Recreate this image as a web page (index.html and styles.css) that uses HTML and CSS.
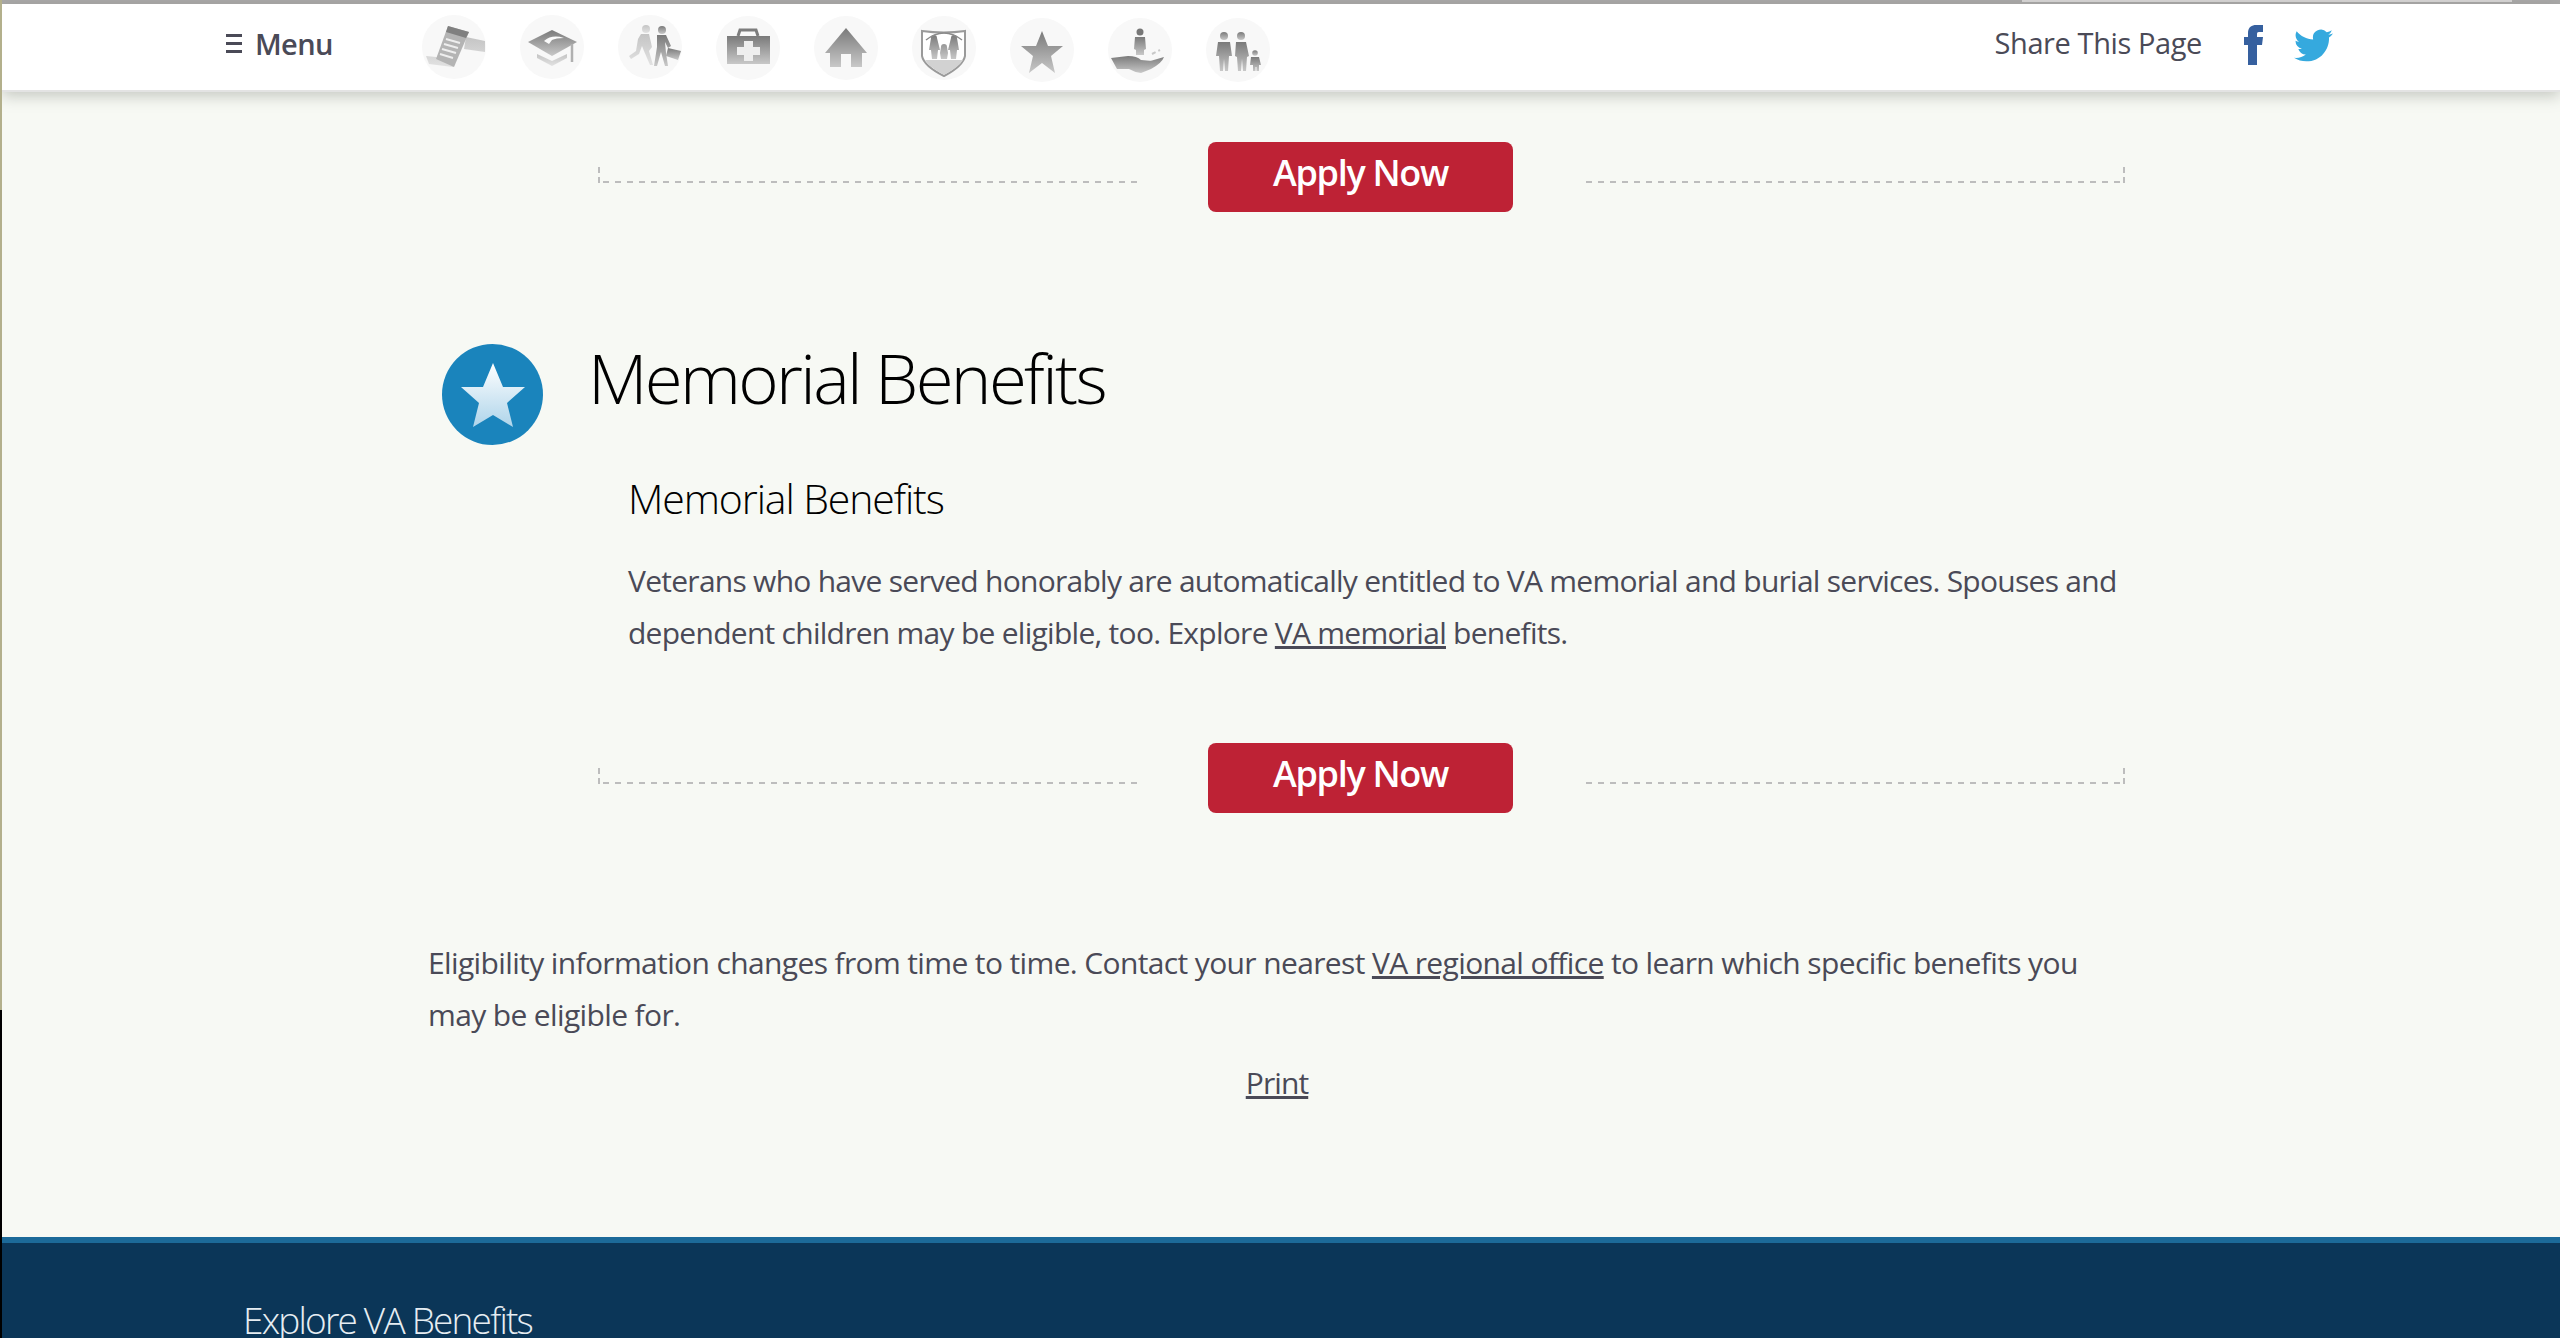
FILE: index.html
```html
<!DOCTYPE html>
<html>
    <head>
        <meta charset="utf-8">
        <title>Memorial Benefits</title>
        <link rel="stylesheet" href="styles.css">
    </head>
    <body>
        <svg class="defs" width="0" height="0">
            <defs>
                <linearGradient id="gy" x1="0" y1="0" x2="0" y2="1">
                    <stop offset="0" stop-color="#7a7a7a"/>
                    <stop offset="1" stop-color="#c8c8c8"/>
                </linearGradient>
                <linearGradient id="lt" x1="0" y1="0" x2="0" y2="1">
                    <stop offset="0" stop-color="#c4c4c4"/>
                    <stop offset="1" stop-color="#e2e2e2"/>
                </linearGradient>
                <linearGradient id="st" x1="0" y1="0" x2="0" y2="1">
                    <stop offset="0" stop-color="#fff"/>
                    <stop offset="1" stop-color="#aed4ea"/>
                </linearGradient>
            </defs>
        </svg>
        <div id="page">
            <div id="topstrip"></div>
            <div id="nav">
                <a class="menu"><span class="burger"><i></i><i></i><i></i></span>Menu</a>
                <div class="navicons">
                    <span class="ni"><svg viewBox="0 0 64 64"><path fill="url(#lt)" d="M44 22l19 4v11l-21-3zM4 41l30 3-3 8-24-3z"/><path fill="#b4b4b4" d="M26 11l21 6-15 35-18-8z"/><path fill="#808080" d="M26 11l21 6-3 6-20-6z"/><path fill="none" stroke="#eee" stroke-width="2" d="M24 24l14 4M22 29l14 4M20 34l14 4M18 39l13 4"/></svg></span>
                    <span class="ni"><svg viewBox="0 0 64 64"><path fill="url(#gy)" d="M32 15l25 12-25 14L8 27z"/><path fill="#fafafa" d="M24 26q8-7 20-3-8 0-12 2l-3 4z"/><path fill="url(#lt)" d="M17 39l15 7 15-7v4L32 51l-15-8z"/><path fill="none" stroke="#b0b0b0" stroke-width="2.500" d="M52 29v18"/></svg></span>
                    <span class="ni"><svg viewBox="0 0 64 64"><g fill="url(#lt)"><circle cx="28" cy="14" r="4"/><path d="M23 19h8l3 13-3 4 4 14h-3l-6-14-2-5-3 8-8 5-2-3 7-5 2-12z"/></g><g fill="url(#gy)"><circle cx="44" cy="15" r="4"/><path d="M39 20h9l5 11-3 2-3-6 1 11 2 13h-3l-4-14-4 14h-3l3-19z"/><path d="M50 33l13 3-3 9-12-4z"/></g></svg></span>
                    <span class="ni"><svg viewBox="0 0 64 64"><path fill="none" stroke="#7d7d7d" stroke-width="3" d="M22 20l2-6h16l2 6"/><path fill="url(#gy)" d="M11 20h43v28H11z"/><path fill="#eee" d="M28 25h9v6h7v8h-7v6h-9v-6h-7v-8h7z"/></svg></span>
                    <span class="ni"><svg viewBox="0 0 64 64"><path fill="url(#gy)" d="M32 12l21 25h-5v14H37V38H27v13H16V37h-5z"/></svg></span>
                    <span class="ni"><svg viewBox="0 0 64 64"><path fill="#fff" stroke="#9a9a9a" stroke-width="2" d="M10 15q22 3 43 0v25q-2 10-21 20Q12 50 10 40z"/><path fill="url(#gy)" d="M19 22a3 3 0 016 0l3 12h-2l-1 9h-5l-1-9h-2zM39 22a3 3 0 016 0l2 12h-2l-1 9h-5l-1-9h-2zM29 31a3 3 0 016 0l1 6-1 6h-6l-1-6z"/><path fill="none" stroke="#8a8a8a" stroke-width="1.500" d="M14 24q18-14 36 0"/><path fill="#d2d2d2" d="M13 44h38q-4 7-19 15-15-8-19-15z"/></svg></span>
                    <span class="ni"><svg viewBox="0 0 64 64"><path fill="url(#gy)" d="M32 13l6 15h15L41 38l4 17-13-10-13 10 4-17-12-10h15z"/></svg></span>
                    <span class="ni"><svg viewBox="0 0 64 64"><circle cx="32" cy="14" r="3.500" fill="#777"/><path fill="url(#gy)" d="M27 19h10l1 12-2 1v5h-8v-5l-2-1z"/><path fill="url(#gy)" d="M3 40l17-2q9 0 13 4l11 1q-1 3-12 3l24-7q-2 6-13 12l-10 4q-7-1-12-4H9z"/><path fill="none" stroke="#c8c8c8" stroke-width="2" stroke-dasharray="4 3" d="M44 36l8-4"/></svg></span>
                    <span class="ni"><svg viewBox="0 0 64 64"><g fill="url(#gy)"><circle cx="18" cy="18" r="4"/><path d="M12 24h12l2 14h-3l-1 15h-3l-1-12-1 12h-3l-1-15h-3z"/><circle cx="35" cy="18" r="4"/><path d="M30 24h10l3 14-2 1-1 14h-3l-1-12-1 12h-3l-1-14-2-1z"/><circle cx="49" cy="35" r="2.800"/><path d="M45 39h8l2 8h-2v6h-2.500v-4h-1v4H47v-6h-3z"/></g></svg></span>
                </div>
                <div class="share">
                    <span>Share This Page</span>
                    <svg class="fb" viewBox="0 0 19 40"><path fill="#36609f" d="M4 40V20H0v-8h4V8C4 2 8 0 12 0h7v7h-4c-2 0-2 1-2 3v2h6l-1 8h-5v20z"/></svg>
                    <svg class="tw" viewBox="0 2 24 20"><path fill="#35a9de" d="M23.950 4.570a10 10 0 01-2.820.770 4.960 4.960 0 002.160-2.720c-.950.550-2 .960-3.120 1.190a4.920 4.920 0 00-8.380 4.480C7.690 8.090 4.070 6.130 1.640 3.160a4.820 4.820 0 00-.670 2.480c0 1.710.870 3.210 2.190 4.100a4.900 4.900 0 01-2.230-.620v.060a4.920 4.920 0 003.950 4.830 5 5 0 01-2.210.080 4.940 4.940 0 004.600 3.420A9.870 9.870 0 010 19.540a13.940 13.940 0 007.550 2.210c9.050 0 14-7.500 14-13.980 0-.210 0-.420-.020-.630a9.940 9.940 0 002.460-2.550z"/></svg>
                </div>
            </div>

            <div id="bd">
                <div class="applyrow">
                    <div class="dash left"></div>
                    <a class="apply">Apply Now</a>
                    <div class="dash right"></div>
                </div>

                <div class="benefit">
                    <svg class="benicon" viewBox="0 0 101 101"><circle cx="50.500" cy="50.500" r="50.500" fill="#1a84bc"/><path fill="url(#st)" d="M51 19l10 24h22L65 59l6 24-20-12-20 12 6-24-18-16h22z"/></svg>
                    <div class="bentext">
                        <h1>Memorial Benefits</h1>
                        <div class="bensub">
                            <h2>Memorial Benefits</h2>
                            <p>Veterans who have served honorably are automatically entitled to VA memorial and burial services. Spouses and dependent children may be eligible, too. Explore <a>VA memorial</a> benefits.</p>
                        </div>
                    </div>
                </div>

                <div class="applyrow">
                    <div class="dash left"></div>
                    <a class="apply">Apply Now</a>
                    <div class="dash right"></div>
                </div>

                <p class="note">Eligibility information changes from time to time. Contact your nearest <a>VA regional office</a> to learn which specific benefits you may be eligible for.</p>
                <p class="print"><a>Print</a></p>
            </div>

            <div id="ft">
                <h3>Explore VA Benefits</h3>
            </div>
        </div>
    </body>
</html>
```

FILE: styles.css
```css
html, body {
    margin: 0;
    padding: 0;
    height: 1338px;
    overflow: hidden;
}
body {
    font-family: "Open Sans", "Liberation Sans", sans-serif;
    color: #4a4a57;
    background: linear-gradient(#b3b08c 0 1010px, #000 1010px);
}
.defs { position: absolute; }
#page {
    margin-left: 2px;
    height: 1338px;
    background-color: #f7f9f4;
    overflow: hidden;
}
#topstrip {
    height: 4px;
    background: linear-gradient(#d8d6d6, #d8d6d6) 2020px 0 / 490px 2px no-repeat, #a9a8a8;
}

/* nav */
#nav {
    height: 86px;
    display: flex;
    align-items: center;
    background-color: #fff;
    border-bottom: 2px solid #e3e3e3;
    box-shadow: 0 4px 14px rgba(120,125,115,0.4);
    position: relative;
    padding-left: 224px;
    padding-right: 227px;
}
.menu {
    display: flex;
    align-items: center;
    width: 196px;
    font-size: 29px;
    font-weight: 600;
    letter-spacing: -0.6px;
    margin-top: -8px;
    text-decoration: none;
}
.burger {
    display: flex;
    flex-direction: column;
    gap: 5px;
    width: 16px;
    margin-right: 13px;
}
.burger i {
    display: block;
    height: 3px;
    background-color: #4a4a57;
}
.navicons {
    display: flex;
    gap: 34px;
    flex: 1;
    margin-top: 2px;
}
.ni {
    width: 64px;
    height: 64px;
    border-radius: 50%;
    background-color: #f8f8f8;
    display: block;
}
.ni:nth-child(n+4) { margin-top: 1px; }
.ni:nth-child(n+7) { margin-top: 3px; }
.ni svg {
    display: block;
    width: 64px;
    height: 64px;
    filter: blur(0.7px);
}
.share {
    display: flex;
    align-items: center;
    font-size: 29px;
    letter-spacing: -0.4px;
    margin-top: -10px;
}
.share .fb {
    width: 19px;
    height: 40px;
    margin-left: 42px;
    margin-top: 6px;
    filter: blur(0.5px);
}
.share .tw {
    width: 39px;
    height: 33px;
    margin-left: 31px;
    margin-top: 6px;
    filter: blur(0.4px);
}

/* content */
#bd {
    padding-top: 50px;
    height: 1145px;
    box-sizing: border-box;
}
.applyrow {
    display: flex;
    margin-left: 596px;
    width: 1527px;
    height: 70px;
    align-items: flex-start;
}
.apply {
    display: block;
    width: 305px;
    height: 70px;
    margin: 0 71px;
    flex: none;
    box-sizing: border-box;
    background-color: #be2235;
    border-radius: 8px;
    color: #fff;
    font-size: 36px;
    font-weight: 600;
    letter-spacing: -1.3px;
    line-height: 62px;
    text-align: center;
    text-decoration: none;
}
.dash {
    height: 20px;
    margin-top: 21px;
}
.dash.left {
    flex: none;
    width: 539px;
    background:
        repeating-linear-gradient(90deg, transparent 0 5px, #bdbdbd 5px 11px, transparent 11px 12px) left bottom / 100% 2px no-repeat,
        repeating-linear-gradient(0deg, #bdbdbd 0 6px, transparent 6px 10px) left bottom / 2px 100% no-repeat;
}
.dash.right {
    flex: 1;
    background:
        repeating-linear-gradient(270deg, transparent 0 5px, #bdbdbd 5px 11px, transparent 11px 12px) right bottom / 100% 2px no-repeat,
        repeating-linear-gradient(0deg, #bdbdbd 0 6px, transparent 6px 10px) right bottom / 2px 100% no-repeat;
}
.benefit {
    display: flex;
    margin: 132px 0 0 440px;
    height: 399px;
}
.benicon {
    width: 101px;
    height: 101px;
    flex: none;
    margin-right: 45px;
}
.bentext { width: 1560px; }
h1 {
    margin: -12px 0 0 0;
    font-size: 69px;
    line-height: 90px;
    font-weight: 300;
    color: #000;
    letter-spacing: -2.7px;
}
.bensub { margin-left: 40px; width: 1500px; }
h2 {
    margin: 46px 0 0 0;
    font-size: 41px;
    line-height: 60px;
    font-weight: 300;
    color: #000;
    letter-spacing: -1.1px;
}
.bensub p {
    margin: 27px 0 0 0;
    font-size: 30px;
    line-height: 52px;
    letter-spacing: -0.73px;
}
a { color: inherit; text-decoration: underline; }
.note {
    margin: 124px 0 0 426px;
    width: 1680px;
    font-size: 30px;
    line-height: 52px;
    letter-spacing: -0.63px;
}
.print {
    margin: 16px 0 0 0;
    width: 2550px;
    text-align: center;
    font-size: 30px;
    line-height: 52px;
    letter-spacing: -0.9px;
}

/* footer */
#ft {
    height: 101px;
    background-color: #0b3658;
    border-top: 6px solid #1c6a99;
    overflow: hidden;
}
#ft h3 {
    margin: 52px 0 0 241px;
    font-size: 37px;
    line-height: 50px;
    font-weight: 300;
    color: #e6edf2;
    letter-spacing: -1.8px;
}
```
